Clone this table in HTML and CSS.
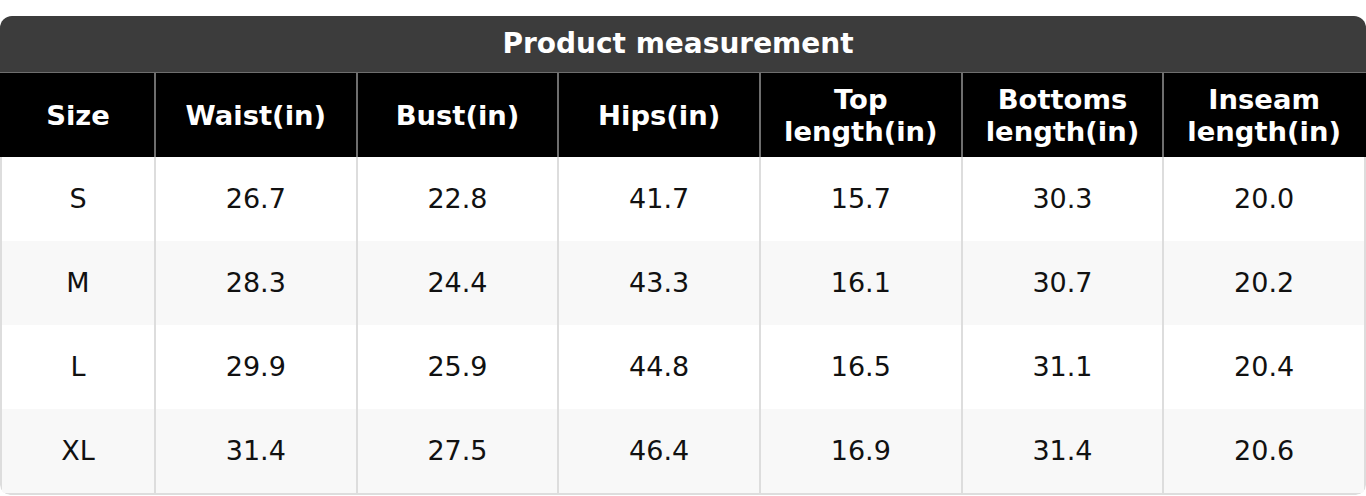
FILE: index.html
```html
<!DOCTYPE html>
<html lang="en">
<head>
<meta charset="utf-8">
<title>Product measurement</title>
<link rel="stylesheet" href="styles.css">
</head>
<body>
<div class="page">
  <div class="card">
    <div class="title">Product measurement</div>
    <div class="row head">
      <div class="cell">Size</div>
      <div class="cell">Waist(in)</div>
      <div class="cell">Bust(in)</div>
      <div class="cell">Hips(in)</div>
      <div class="cell">Top<br>length(in)</div>
      <div class="cell">Bottoms<br>length(in)</div>
      <div class="cell">Inseam<br>length(in)</div>
    </div>
    <div class="body">
      <div class="row">
        <div class="cell">S</div><div class="cell">26.7</div><div class="cell">22.8</div><div class="cell">41.7</div><div class="cell">15.7</div><div class="cell">30.3</div><div class="cell">20.0</div>
      </div>
      <div class="row alt">
        <div class="cell">M</div><div class="cell">28.3</div><div class="cell">24.4</div><div class="cell">43.3</div><div class="cell">16.1</div><div class="cell">30.7</div><div class="cell">20.2</div>
      </div>
      <div class="row">
        <div class="cell">L</div><div class="cell">29.9</div><div class="cell">25.9</div><div class="cell">44.8</div><div class="cell">16.5</div><div class="cell">31.1</div><div class="cell">20.4</div>
      </div>
      <div class="row alt">
        <div class="cell">XL</div><div class="cell">31.4</div><div class="cell">27.5</div><div class="cell">46.4</div><div class="cell">16.9</div><div class="cell">31.4</div><div class="cell">20.6</div>
      </div>
    </div>
  </div>
</div>
</body>
</html>
```
FILE: styles.css
```css
html, body {
  margin: 0;
  padding: 0;
  background: #ffffff;
}
body {
  font-family: "DejaVu Sans", Verdana, sans-serif;
  color: #111111;
}
.page {
  padding-top: 16px;
}
.card {
  border-radius: 12px 12px 10px 10px;
  overflow: hidden;
}
.title {
  height: 56px;
  background: #3c3c3c;
  color: #ffffff;
  font-weight: bold;
  font-size: 28px;
  display: flex;
  align-items: center;
  justify-content: center;
  padding-bottom: 2px;
  padding-right: 10px;
  box-sizing: border-box;
}
.row {
  display: grid;
  grid-template-columns: 152px repeat(6, 1fr);
  height: 84px;
}
.cell {
  display: flex;
  align-items: center;
  justify-content: center;
  text-align: center;
  font-size: 27px;
  line-height: 32px;
  border-left: 2px solid #dddddd;
}
.cell:first-child {
  border-left: none;
}
.head {
  height: 85px;
  padding: 0 2px;
  background: #000000;
  color: #ffffff;
  font-weight: bold;
  border-top: 1px solid #6e6e6e;
  box-sizing: border-box;
}
.head .cell {
  font-size: 27.4px;
  border-left-color: #6e6e6e;
  padding-top: 2px;
}
.body {
  border: 2px solid #dddddd;
  border-top: none;
  border-radius: 0 0 10px 10px;
}
.body .row {
  background: #ffffff;
}
.body .row.alt {
  background: #f8f8f8;
}
```
